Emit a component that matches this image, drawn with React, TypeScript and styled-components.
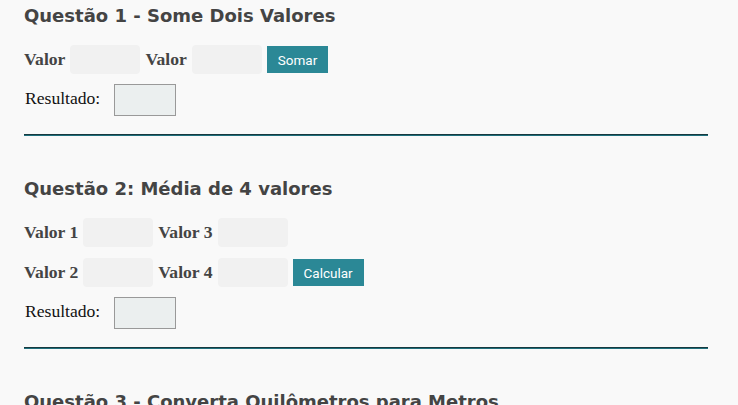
import styled, { createGlobalStyle } from "styled-components";

const GlobalStyle = createGlobalStyle`
	body {
		margin: 0;
		background: #f9f9f9;
	}
`;

const Page = styled.div`
	padding: 5px 30px 0 24px;
`;

const Section = styled.section`
	display: flex;
	flex-direction: column;
	margin-bottom: 42px;
`;

const Title = styled.h2`
	margin: 0 0 18px 0;
	font-family: "DejaVu Sans", sans-serif;
	font-weight: bold;
	font-size: 18px;
	line-height: 22px;
	color: #444;
`;

const Row = styled.div`
	display: flex;
	align-items: center;
	gap: 5px;
	margin-bottom: 10px;

	& + & {
		margin-top: 1px;
	}
`;

const Label = styled.label`
	font-family: "Liberation Serif", serif;
	font-weight: bold;
	font-size: 17.6px;
	color: #444;
`;

const Field = styled.input`
	width: 70px;
	height: 29px;
	box-sizing: border-box;
	border: none;
	border-radius: 4px;
	background: #f1f1f1;
	padding: 0 6px;
`;

const Button = styled.button`
	height: 27px;
	padding: 0 11px;
	border: none;
	background: #2b8896;
	color: #fff;
	font-family: Roboto, "Liberation Sans", sans-serif;
	font-size: 13.5px;
	cursor: pointer;
`;

const ResultRow = styled.div`
	display: flex;
	align-items: center;
	gap: 14px;
	padding-left: 1px;
`;

const ResultLabel = styled.span`
	font-family: "Liberation Serif", serif;
	font-size: 17.6px;
	color: #111;
	padding-bottom: 3px;
`;

const ResultBox = styled.input`
	width: 62px;
	height: 32px;
	box-sizing: border-box;
	border: 1px solid #999;
	background: #ebefef;
`;

const Divider = styled.hr`
	margin: 18px 0 0 0;
	border: none;
	border-top: 1px solid #17393f;
	border-bottom: 1px solid #1f6f7c;
	height: 0;
`;

const Result = () => (
	<ResultRow>
		<ResultLabel>Resultado:</ResultLabel>
		<ResultBox readOnly />
	</ResultRow>
);

export default function App() {
	return (
		<>
			<GlobalStyle />
			<Page>
				<Section>
					<Title>Questão 1 - Some Dois Valores</Title>
					<Row>
						<Label>Valor</Label>
						<Field />
						<Label>Valor</Label>
						<Field />
						<Button>Somar</Button>
					</Row>
					<Result />
					<Divider />
				</Section>
				<Section>
					<Title>Questão 2: Média de 4 valores</Title>
					<Row>
						<Label>Valor 1</Label>
						<Field />
						<Label>Valor 3</Label>
						<Field />
					</Row>
					<Row>
						<Label>Valor 2</Label>
						<Field />
						<Label>Valor 4</Label>
						<Field />
						<Button>Calcular</Button>
					</Row>
					<Result />
					<Divider />
				</Section>
				<Section>
					<Title>Questão 3 - Converta Quilômetros para Metros</Title>
				</Section>
			</Page>
		</>
	);
}
